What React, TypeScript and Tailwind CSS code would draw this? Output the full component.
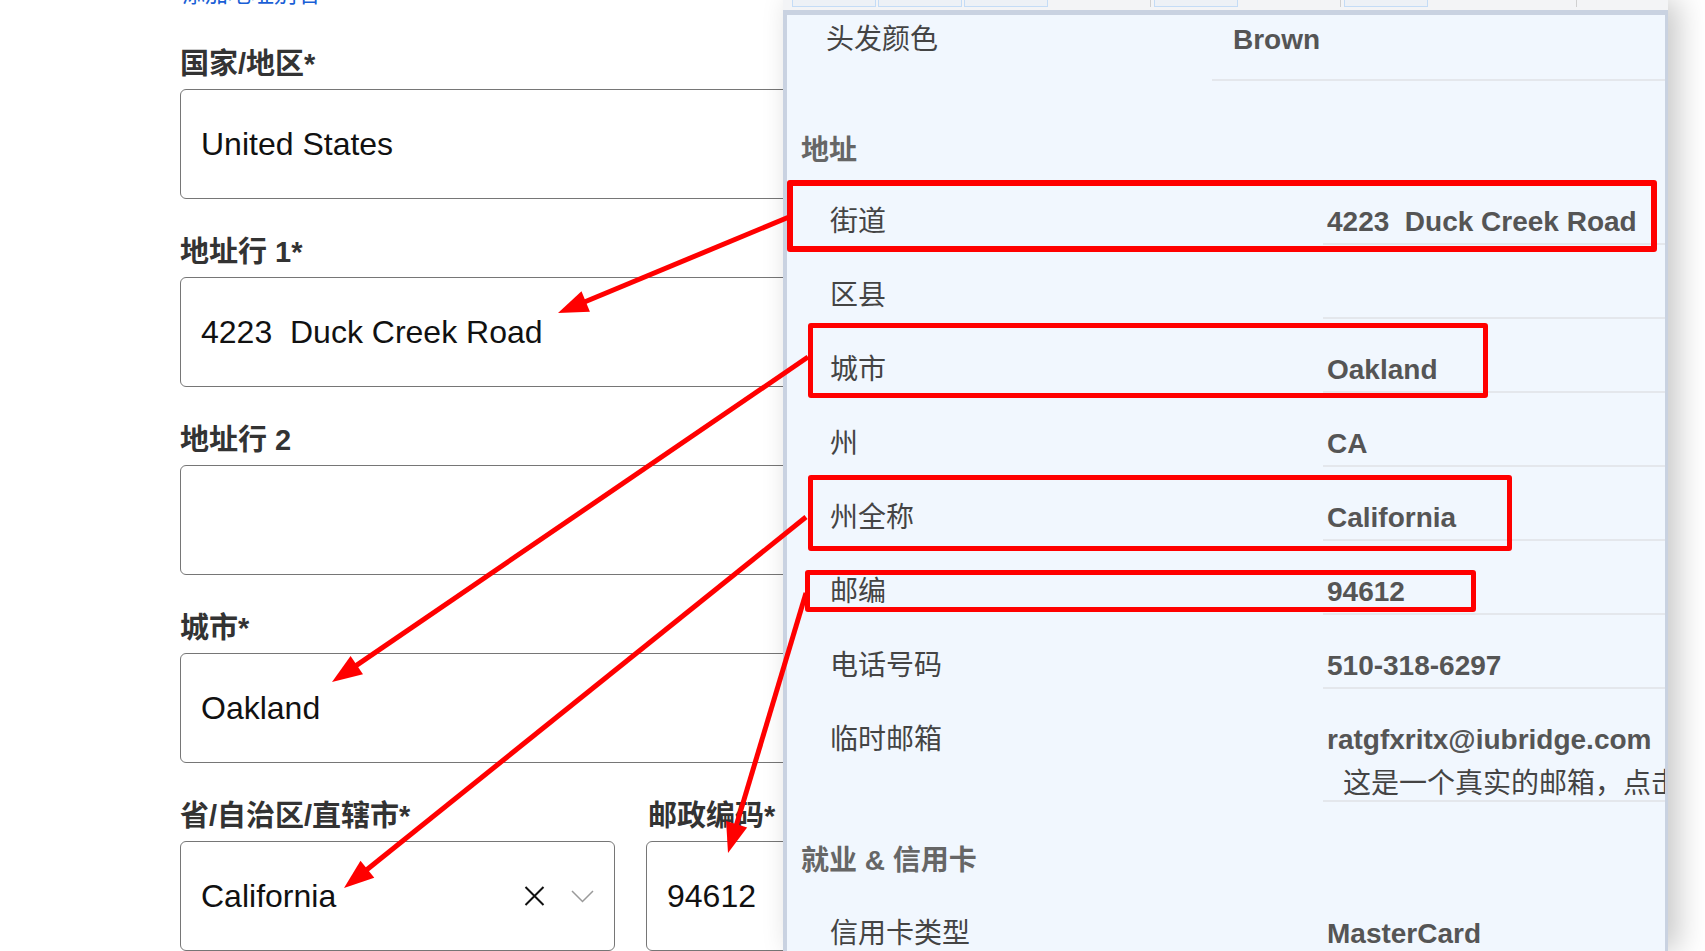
import React from 'react';

const fields = [
  { label: '国家/地区*', value: 'United States' },
  { label: '地址行 1*', value: '4223  Duck Creek Road' },
  { label: '地址行 2', value: '' },
  { label: '城市*', value: 'Oakland' },
];

const addressRows = [
  { label: '街道', value: '4223  Duck Creek Road' },
  { label: '区县', value: '' },
  { label: '城市', value: 'Oakland' },
  { label: '州', value: 'CA' },
  { label: '州全称', value: 'California' },
  { label: '邮编', value: '94612' },
  { label: '电话号码', value: '510-318-6297' },
];

const boxes = [
  { id: 1, cls: 'left-[787px] top-[180px] w-[870px] h-[72px] border-[6px]' },
  { id: 2, cls: 'left-[808px] top-[323px] w-[680px] h-[75px] border-[5px]' },
  { id: 3, cls: 'left-[808px] top-[475px] w-[704px] h-[76px] border-[5px]' },
  { id: 4, cls: 'left-[805px] top-[570px] w-[671px] h-[42px] border-[5px]' },
];

const arrows = [
  { x1: 789, y1: 217, x2: 558, y2: 313 },
  { x1: 808, y1: 357, x2: 332, y2: 682 },
  { x1: 806, y1: 517, x2: 344, y2: 888 },
  { x1: 806, y1: 593, x2: 728, y2: 853 },
];

const Arrow = ({ x1, y1, x2, y2 }: { x1: number; y1: number; x2: number; y2: number }) => {
  const dx = x2 - x1;
  const dy = y2 - y1;
  const len = Math.hypot(dx, dy);
  const ux = dx / len;
  const uy = dy / len;
  const L = 30;
  const W = 11;
  const bx = x2 - ux * L;
  const by = y2 - uy * L;
  const pts = `${x2},${y2} ${bx - uy * W},${by + ux * W} ${bx + uy * W},${by - ux * W}`;
  return (
    <g>
      <line x1={x1} y1={y1} x2={bx + ux * 4} y2={by + uy * 4} stroke="#ff0000" strokeWidth={5} />
      <polygon points={pts} fill="#ff0000" />
    </g>
  );
};

const FormLabel = ({ children }: { children: React.ReactNode }) => (
  <div className="text-[29px] leading-[32px] font-bold text-[#333]">{children}</div>
);

const FormInput = ({ value, className = '' }: { value: string; className?: string }) => (
  <div
    className={`mt-[9px] h-[110px] border-[1.5px] border-[#767676] rounded-[6px] flex items-center pl-[20px] text-[32px] text-[#111] whitespace-pre ${className}`}
  >
    {value}
  </div>
);

export default function App() {
  return (
    <div className="relative w-[1705px] h-[951px] overflow-hidden bg-white font-['Liberation_Sans','Noto_Sans_CJK_SC',sans-serif]">
      {/* form on the left */}
      <div className="pl-[180px] w-[1020px] flex flex-col">
        <div className="h-[8px] overflow-hidden pl-[2px]">
          <div className="-mt-[18px] text-[23px] leading-[24px] text-[#1a5fd6]">添加地址别名</div>
        </div>
        {fields.map((f, i) => (
          <div key={f.label} className={i === 0 ? 'mt-[40px]' : 'mt-[37px]'}>
            <FormLabel>{f.label}</FormLabel>
            <FormInput value={f.value} />
          </div>
        ))}
        <div className="mt-[37px] flex gap-[31px]">
          <div className="w-[435px] shrink-0">
            <FormLabel>省/自治区/直辖市*</FormLabel>
            <div className="mt-[9px] h-[110px] border-[1.5px] border-[#767676] rounded-[6px] flex items-center pl-[20px] pr-[20px] text-[32px] text-[#111]">
              <span className="flex-1">California</span>
              <svg width="21" height="20" viewBox="0 0 21 20" className="mr-[26px]">
                <path d="M1.5 1 L19.5 19 M19.5 1 L1.5 19" stroke="#111" strokeWidth="2" fill="none" />
              </svg>
              <svg width="23" height="13" viewBox="0 0 23 13">
                <path d="M1 1 L11.5 11.5 L22 1" stroke="#9a9a9a" strokeWidth="1.5" fill="none" />
              </svg>
            </div>
          </div>
          <div className="flex-1 pl-[2px]">
            <FormLabel>邮政编码*</FormLabel>
            <FormInput value="94612" className="-ml-[2px]" />
          </div>
        </div>
      </div>

      {/* detail panel on the right */}
      <div className="absolute left-[783px] top-0 w-[885px] h-[951px] flex flex-col shadow-[10px_0_28px_rgba(0,0,0,0.22)]">
        <div className="h-[10px] bg-[#f3f4f6] flex items-start">
          <div className="ml-[9px] w-[84px] h-[7px] border-[1.5px] border-t-0 border-[#c4dcf6] bg-[#edf1f6]" />
          <div className="ml-[2px] w-[84px] h-[7px] border-[1.5px] border-t-0 border-[#c4dcf6] bg-[#edf1f6]" />
          <div className="ml-[2px] w-[84px] h-[7px] border-[1.5px] border-t-0 border-[#c4dcf6] bg-[#edf1f6]" />
          <div className="ml-[102px] w-px h-[7px] bg-[#d0d0d0]" />
          <div className="ml-[3px] w-[84px] h-[7px] border-[1.5px] border-t-0 border-[#c4dcf6] bg-[#edf1f6]" />
          <div className="ml-[102px] w-px h-[7px] bg-[#d0d0d0]" />
          <div className="ml-[3px] w-[84px] h-[7px] border-[1.5px] border-t-0 border-[#c4dcf6] bg-[#edf1f6]" />
          <div className="ml-[148px] w-px h-[7px] bg-[#d0d0d0]" />
        </div>
        <div className="h-[5px] bg-[#c9d2e1]" />
        <div className="flex-1 bg-[#f1f7fe] border-l-[4px] border-r-[3px] border-[#c9d2e1] overflow-hidden text-[28px] leading-[28px]">
          <div className="grid grid-cols-[425px_1fr] h-[66px]">
            <div className="pl-[39px] pt-[11px] text-[#444]">头发颜色</div>
            <div className="pl-[21px] pt-[11px] border-b-2 border-[#e4e7ec] font-bold text-[#555]">Brown</div>
          </div>

          <div className="mt-[56px] pl-[14px] font-bold text-[#666]">地址</div>

          <div className="mt-[6px]">
            {addressRows.map((r) => (
              <div key={r.label} className="grid grid-cols-[536px_1fr]">
                <div className="pl-[43px] pt-[37px] text-[#444]">{r.label}</div>
                <div className="pl-[4px] pt-[37px] pb-[7px] border-b-2 border-[#e4e7ec] font-bold text-[#555] whitespace-pre min-h-[74px]">
                  {r.value}
                </div>
              </div>
            ))}
            <div className="grid grid-cols-[536px_1fr]">
              <div className="pl-[43px] pt-[37px] text-[#444]">临时邮箱</div>
              <div className="pl-[4px] pt-[37px] pb-[2px] border-b-2 border-[#e4e7ec] whitespace-nowrap overflow-hidden">
                <div className="font-bold text-[#555]">ratgfxritx@iubridge.com</div>
                <div className="mt-[16px] pl-[16px] text-[#444]">这是一个真实的邮箱，点击复制</div>
              </div>
            </div>
          </div>

          <div className="mt-[45px] pl-[14px] font-bold text-[#666]">就业 &amp; 信用卡</div>

          <div className="mt-[8px] grid grid-cols-[536px_1fr]">
            <div className="pl-[43px] pt-[37px] text-[#444]">信用卡类型</div>
            <div className="pl-[4px] pt-[37px] pb-[7px] border-b-2 border-[#e4e7ec] font-bold text-[#555]">MasterCard</div>
          </div>
        </div>
      </div>

      {/* annotations */}
      {boxes.map((b) => (
        <div key={b.id} className={`absolute border-[#ff0000] rounded-[3px] ${b.cls}`} />
      ))}
      <svg className="absolute inset-0 pointer-events-none" width="1705" height="951" viewBox="0 0 1705 951">
        {arrows.map((a, i) => (
          <Arrow key={i} {...a} />
        ))}
      </svg>
    </div>
  );
}
